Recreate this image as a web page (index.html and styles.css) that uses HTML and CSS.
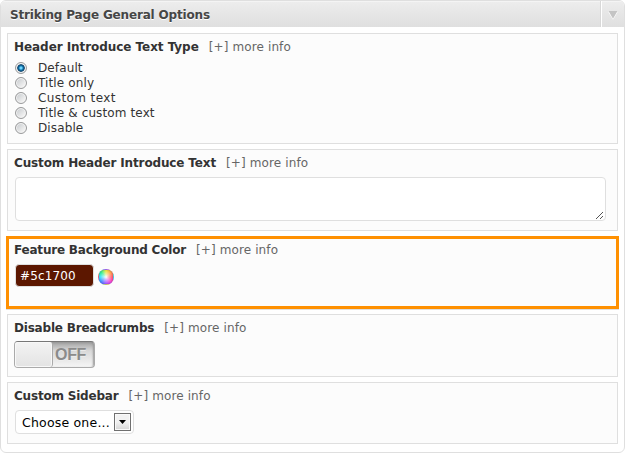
FILE: index.html
```
<!DOCTYPE html>
<html lang="en">
<head>
<meta charset="utf-8">
<title>Striking Page General Options</title>
<link rel="stylesheet" href="styles.css">
</head>
<body>
<main class="panel">
  <header class="panel-header">
    <h1>Striking Page General Options</h1>
    <button class="collapse" aria-label="Collapse"><svg width="10" height="9" viewBox="0 0 10 9"><path d="M0 .5h10L5 8.8z" fill="#fff"/><path d="M.5 0h9L5 7.8z" fill="#c4c4c4"/></svg></button>
  </header>
  <div class="options">
    <section class="option type">
      <div class="heading"><h2>Header Introduce Text Type</h2><a class="info">[+] more info</a></div>
      <div class="radios">
        <label><input type="radio" name="type" checked><span>Default</span></label>
        <label><input type="radio" name="type"><span>Title only</span></label>
        <label><input type="radio" name="type"><span class="wide">Custom text</span></label>
        <label><input type="radio" name="type"><span>Title &amp; custom text</span></label>
        <label><input type="radio" name="type"><span>Disable</span></label>
      </div>
    </section>
    <section class="option intro">
      <div class="heading"><h2>Custom Header Introduce Text</h2><a class="info">[+] more info</a></div>
      <div class="textarea"><svg width="8" height="8" viewBox="0 0 8 8" shape-rendering="crispEdges"><path d="M0 7h1v1H0zM1 6h1v1H1zM2 5h1v1H2zM3 4h1v1H3zM4 3h1v1H4zM5 2h1v1H5zM6 1h1v1H6zM4 7h1v1H4zM5 6h1v1H5zM6 5h1v1H6z" fill="#555"/></svg></div>
    </section>
    <section class="option color">
      <div class="heading"><h2>Feature Background Color</h2><a class="info">[+] more info</a></div>
      <div class="color-row"><div class="color-value">#5c1700</div><div class="wheel"></div></div>
    </section>
    <section class="option crumbs">
      <div class="heading"><h2>Disable Breadcrumbs</h2><a class="info">[+] more info</a></div>
      <div class="switch"><div class="handle"></div><span>OFF</span></div>
    </section>
    <section class="option sidebar">
      <div class="heading"><h2>Custom Sidebar</h2><a class="info">[+] more info</a></div>
      <div class="select"><span>Choose one...</span><div class="arrow"><svg width="7" height="4" viewBox="0 0 7 4"><path d="M0 0h7L3.5 4z"/></svg></div></div>
    </section>
  </div>
</main>
</body>
</html>
```
FILE: styles.css
```
* { box-sizing: border-box; }
body {
  margin: 0;
  background: #fff;
  color: #333;
  font: 12px/15px "DejaVu Sans", Verdana, sans-serif;
}
.panel {
  width: 625px;
  height: 453px;
  border: 1px solid #dfdfdf;
  border-radius: 6px;
  overflow: hidden;
}
.panel-header {
  display: flex;
  height: 26px;
  background: linear-gradient(#ededed, #dfdfdf);
  box-shadow: inset 0 1px #f4f4f4;
}
h1, h2 {
  margin: 0;
  font-size: 12px;
  font-weight: bold;
  white-space: nowrap;
}
h1 {
  flex: 1;
  padding-left: 9px;
  line-height: 28px;
  color: #464646;
  text-shadow: 0 1px #fff;
  letter-spacing: -.17px;
}
.collapse {
  display: flex;
  width: 23px;
  padding: 10px 0 0 6px;
  border: 0;
  border-left: 1px solid #fff;
  background: none;
  box-shadow: -1px 0 #d8d8d8;
}
.options {
  display: flex;
  flex-direction: column;
  gap: 5px;
  padding: 6px 6px 0;
}
.option {
  width: 611px;
  padding: 6px 6px 0;
  border: 1px solid #dfdfdf;
  background: #fcfcfc;
}
.type { height: 111px; }
.intro { height: 82px; }
.color {
  width: 613px;
  height: 73px;
  margin-left: -1px;
  border: 3px solid #ff9000;
  padding: 4px 5px 0;
  box-shadow: 0 1px #dfdfdf;
}
.crumbs { height: 63px; }
.sidebar { height: 62px; }
.heading {
  display: flex;
  gap: 10px;
  height: 15px;
  white-space: nowrap;
}
h2 { letter-spacing: -.2px; }
.type h2 { letter-spacing: -.06px; }
.intro h2 { letter-spacing: -.14px; }
.info { color: #666; letter-spacing: .12px; }
.radios { padding: 5px 0 0 1px; letter-spacing: .12px; }
.radios .wide { letter-spacing: .4px; }
.radios label { display: flex; align-items: flex-start; height: 15px; }
.radios span { padding-top: 1px; }
.radios input {
  appearance: none;
  width: 12px;
  height: 12px;
  margin: 2px 11px 0 0;
  border: 1px solid #999a9b;
  border-radius: 50%;
  background: linear-gradient(135deg, #c3c7cb, #f0f0f0 75%);
  box-shadow: inset 0 0 0 1px #f4f4f4;
}
.radios input:checked {
  background: radial-gradient(circle at 50% 50%, #6fd5ff 0 1px, #147bb3 2px, #0a3f68 3.4px, #e1e5e8 4.2px);
}
.textarea {
  display: flex;
  align-items: flex-end;
  justify-content: flex-end;
  width: 591px;
  height: 44px;
  margin: 6px 0 0 1px;
  padding: 0 1px 1px 0;
  border: 1px solid #dfdfdf;
  border-radius: 4px;
  background: #fff;
}
.color-row { display: flex; gap: 4px; padding: 6px 0 0 1px; }
.color-value {
  width: 79px;
  height: 23px;
  padding-left: 4px;
  border: 1px solid #dfdfdf;
  border-radius: 4px;
  background: #5c1700;
  color: #fff;
  line-height: 22px;
  letter-spacing: .15px;
}
.wheel {
  width: 16px;
  height: 16px;
  margin-top: 5px;
  border: 1px solid rgba(110, 110, 170, .3);
  border-radius: 50%;
  background: radial-gradient(circle, #fff 0, rgba(255,255,255,.6) 25%, transparent 70%), conic-gradient(#e8e02e, #ff9a3c, #ff485e, #f53ad0, #9b4bff, #3c7dff, #1ce0ff, #28ee85, #e8e02e);
}
.switch {
  display: flex;
  width: 81px;
  height: 27px;
  margin-top: 5px;
  border: 1px solid #aaa;
  border-top-color: #777;
  border-radius: 4px;
  background: linear-gradient(#a2a2a2, #d8d8d8 35%, #f5f5f5);
  box-shadow: inset -1px 1px 2px #999;
}
.handle {
  width: 38px;
  height: 25px;
  border-right: 1px solid #aaa;
  border-radius: 3px;
  background: linear-gradient(#f3f3f3, #e3e3e3);
  box-shadow: inset 0 0 0 1px #f8f8f8;
}
.switch span {
  margin-left: 2px;
  color: #8b8b8b;
  font: bold 16px/25px "Liberation Sans", Arial, sans-serif;
  letter-spacing: -.3px;
  text-shadow: 0 1px #eee;
}
.select {
  display: flex;
  justify-content: space-between;
  width: 119px;
  height: 24px;
  margin: 6px 0 0 1px;
  padding: 2px 2px 2px 6px;
  border: 1px solid #dfdfdf;
  border-radius: 4px;
  background: #fff;
  color: #000;
  line-height: 20px;
  font-size: 12.5px;
  letter-spacing: .2px;
}
.arrow {
  display: flex;
  align-items: center;
  justify-content: center;
  width: 17px;
  height: 18px;
  border: 1px solid #707070;
  background: linear-gradient(#f2f2f2 50%, #d5d5d5);
  box-shadow: inset 0 0 0 1px #fafafa;
}
```
